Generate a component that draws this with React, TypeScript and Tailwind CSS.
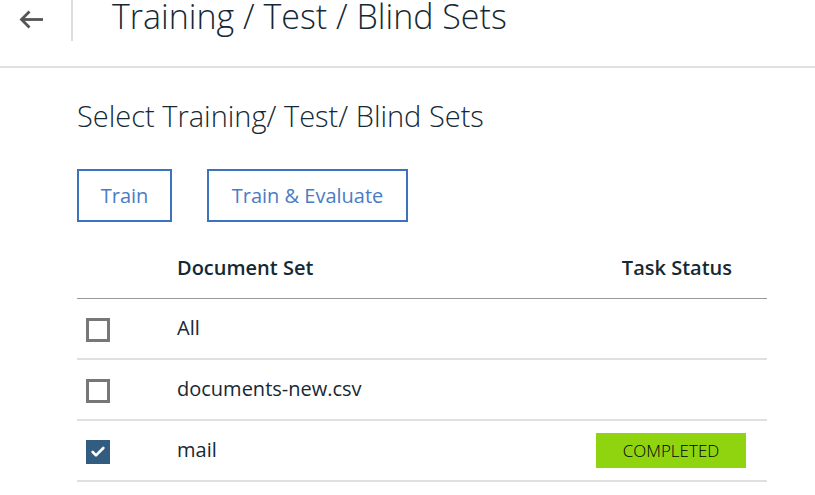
import { Check } from "lucide-react";

const rows = [
  { name: "All", checked: false, status: "" },
  { name: "documents-new.csv", checked: false, status: "" },
  { name: "mail", checked: true, status: "COMPLETED" },
];

function Checkbox({ checked }: { checked: boolean }) {
  if (checked)
    return (
      <div className="w-6 h-6 bg-[#325c80] flex items-center justify-center">
        <Check size={16} strokeWidth={4} className="text-white" />
      </div>
    );
  return <div className="w-6 h-6 border-[3px] border-[#777777]" />;
}

export default function App() {
  return (
    <div className="w-[815px] h-[495px] bg-white overflow-hidden font-['Open_Sans',sans-serif] text-[#152935]">
      <header className="h-[68px] border-b-2 border-[#e0e0e0] flex items-start">
        <div className="w-[73px] h-[41px] border-r-2 border-[#dddddd] flex items-start pl-[19px] pt-[10px]">
          <svg width="25" height="19" viewBox="0 0 25 19" fill="none" stroke="#555555" strokeWidth="2.8">
            <path d="M24 9.5H2.5" />
            <path d="M10.5 1.5L2.5 9.5L10.5 17.5" />
          </svg>
        </div>
        <h1 className="pl-[39px] text-[34px] font-light leading-[32px]">
          Training / Test / Blind Sets
        </h1>
      </header>

      <main className="pl-[77px]">
        <h2 className="mt-[30px] text-[29px] font-light leading-[36px]">
          Select Training/ Test/ Blind Sets
        </h2>

        <div className="flex gap-[35px] mt-[35px]">
          <button className="w-[95px] h-[53px] border-2 border-[#3d73bd] text-[#4a7cc4] text-[20px]">
            Train
          </button>
          <button className="w-[201px] h-[53px] border-2 border-[#3d73bd] text-[#4a7cc4] text-[20px]">
            Train &amp; Evaluate
          </button>
        </div>

        <div className="w-[690px] mt-[16px]">
          <div className="flex items-center h-[61px] border-b border-[#999999] text-[20px] font-semibold">
            <div className="w-[100px]" />
            <div className="flex-1">Document Set</div>
            <div className="w-[190px] text-right pr-[35px]">Task Status</div>
          </div>
          {rows.map((r) => (
            <div
              key={r.name}
              className="flex items-center h-[61px] border-b-2 border-[#e0e0e0] text-[20px]"
            >
              <div className="w-[100px] pl-[9px] pt-[2px]">
                <Checkbox checked={r.checked} />
              </div>
              <div className="flex-1 -mt-[2px]">{r.name}</div>
              <div className="w-[190px] pl-[19px]">
                {r.status && (
                  <div className="w-[150px] h-[35px] bg-[#8fd40f] flex items-center justify-center text-[17px] font-light text-black">
                    {r.status}
                  </div>
                )}
              </div>
            </div>
          ))}
        </div>
      </main>
    </div>
  );
}
